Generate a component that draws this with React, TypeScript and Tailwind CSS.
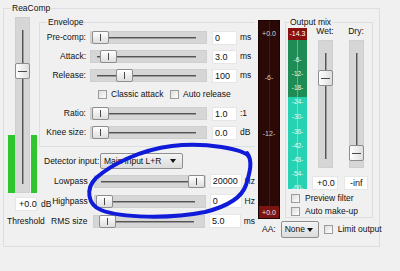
import React from 'react';

const HSlider: React.FC<{ cls: string; pos: number }> = ({ cls, pos }) => (
  <div className={`relative h-[13px] bg-[#d6d6d6] border border-[#cfcfcf] ${cls}`}>
    <div className="absolute left-[6px] right-[10px] top-[5px] h-[2px] bg-[#555] border-b border-[#9a9a9a]" />
    <div
      className="absolute top-[-1px] h-[13px] w-[17px] rounded-[2px] border border-[#8d8d8d] bg-gradient-to-b from-white to-[#dedede]"
      style={{ left: pos }}
    >
      <div className="absolute left-[7px] top-[2px] bottom-[2px] w-px bg-[#4a4a4a]" />
    </div>
  </div>
);

const VSlider: React.FC<{ cls: string; pos: number }> = ({ cls, pos }) => (
  <div className={`relative w-[15px] shrink-0 bg-[#d6d6d6] border border-[#cfcfcf] ${cls}`}>
    <div className="absolute top-[12px] bottom-[8px] left-[6px] w-[2px] bg-[#555] border-r border-[#9a9a9a]" />
    <div
      className="absolute left-[-1px] w-[15px] h-[16px] rounded-[2px] border border-[#8d8d8d] bg-gradient-to-r from-white to-[#dedede]"
      style={{ top: pos }}
    >
      <div className="absolute top-[7px] left-[2px] right-[2px] h-px bg-[#4a4a4a]" />
    </div>
  </div>
);

const Box: React.FC<{ cls: string; children: React.ReactNode }> = ({ cls, children }) => (
  <div className={`h-[14px] bg-white border border-[#e6e6e6] pl-[2px] leading-[12px] text-[9px] ${cls}`}>{children}</div>
);

const Check: React.FC<{ cls?: string }> = ({ cls = '' }) => (
  <div className={`w-[9px] h-[9px] border border-[#9c9c9c] bg-gradient-to-br from-[#dcdcdc] to-white shrink-0 ${cls}`} />
);

const Arrow = () => (
  <svg width="6" height="4" viewBox="0 0 6 4">
    <path d="M0 0 L6 0 L3 4 Z" fill="#111" />
  </svg>
);

const EnvRow: React.FC<{ label: string; pos: number; val: string; unit: string }> = ({ label, pos, val, unit }) => (
  <div className="flex h-[19px] items-center">
    <div className="w-[46px] text-right">{label}</div>
    <HSlider cls="ml-[4px] w-[117px]" pos={pos} />
    <Box cls="ml-[5px] w-[25px]">{val}</Box>
    <span className="ml-[3px]">{unit}</span>
  </div>
);

const DetRow: React.FC<{ label: string; pos: number; val: string; unit: string }> = ({ label, pos, val, unit }) => (
  <div className="flex h-[20px] items-center">
    <div className="w-[49px] text-right">{label}</div>
    <HSlider cls="ml-[6px] w-[113px]" pos={pos} />
    <Box cls="ml-[4px] w-[32px]">{val}</Box>
    <span className="ml-[3px]">{unit}</span>
  </div>
);

const grTicks = [
  { t: '-6-', y: 29 },
  { t: '-12-', y: 43 },
  { t: '-18-', y: 57 },
  { t: '-24-', y: 71 },
  { t: '-30-', y: 86 },
  { t: '-36-', y: 101 },
  { t: '-42-', y: 115 },
  { t: '-48-', y: 129 },
  { t: '-54-', y: 143 },
  { t: '-60-', y: 157 },
];

export default function App() {
  return (
    <div className="relative w-[400px] h-[271px] overflow-hidden bg-[#f0f0f0] pt-[8px] pl-[3px] text-[8.5px] leading-none text-[#111] font-['Liberation_Sans',Arial,sans-serif]">
      {/* ReaComp group */}
      <div className="relative w-[377px] h-[239px] border border-[#d9dfe3]">
        <div className="flex items-start">
          {/* threshold */}
          <div className="ml-[4px] w-[31px] shrink-0 flex flex-col">
            <div className="mt-[8px] flex h-[176px] items-stretch">
              <div className="w-[7px] flex flex-col justify-end">
                <div className="h-[58px] bg-[#2ec52e]" />
              </div>
              <VSlider cls="h-[176px]" pos={45} />
              <div className="w-[6px] ml-px flex flex-col justify-end">
                <div className="h-[58px] bg-[#2ec52e]" />
              </div>
            </div>
            <div className="mt-[4px] ml-[7px] flex items-center whitespace-nowrap">
              <Box cls="w-[22px] h-[12px] leading-[10px] pl-[3px]">+0.0</Box>
              <span className="ml-[4px]">dB</span>
            </div>
            <div className="mt-[6px] -ml-[1px] whitespace-nowrap">Threshold</div>
          </div>

          {/* envelope + detector */}
          <div className="w-[216px] shrink-0">
            <div className="relative mt-[13px] h-[125px] border border-[#d9dfe3] border-r-[#eef0f2] pt-[5px]">
              <span className="absolute left-[7px] top-[-5px] bg-[#f0f0f0] px-px">Envelope</span>
              <EnvRow label="Pre-comp:" pos={1} val="0" unit="ms" />
              <EnvRow label="Attack:" pos={9} val="3.0" unit="ms" />
              <EnvRow label="Release:" pos={25} val="100" unit="ms" />
              <div className="flex h-[19px] items-center">
                <Check cls="ml-[58px]" />
                <span className="ml-[4px] w-[59px] whitespace-nowrap">Classic attack</span>
                <Check />
                <span className="ml-[4px] whitespace-nowrap">Auto release</span>
              </div>
              <EnvRow label="Ratio:" pos={1} val="1.0" unit=":1" />
              <EnvRow label="Knee size:" pos={1} val="0.0" unit="dB" />
            </div>

            <div className="mt-[5px] flex h-[18px] items-center pl-[5px]">
              <span className="w-[56px] whitespace-nowrap">Detector input:</span>
              <div className="flex h-[16px] w-[83px] items-center justify-between rounded-[2px] border border-[#8e8e8e] bg-gradient-to-b from-[#f4f4f4] to-[#dcdcdc] pl-[3px] pr-[6px]">
                <span>Main input L+R</span>
                <Arrow />
              </div>
            </div>
            <div className="mt-px">
              <DetRow label="Lowpass" pos={93} val="20000" unit="Hz" />
              <DetRow label="Highpass" pos={1} val="0" unit="Hz" />
              <DetRow label="RMS size" pos={5} val="5.0" unit="ms" />
            </div>
          </div>

          {/* meters + output mix */}
          <div className="ml-[3px] shrink-0">
            <div className="flex items-start">
              {/* input meter */}
              <div className="relative mt-[11px] h-[199px] w-[22px] bg-[#2a0907] border border-[#1a0504]">
                <div className="absolute left-[10px] top-0 bottom-0 w-px bg-[#4a1813]" />
                <div className="absolute left-0 right-0 bottom-0 h-[12px] bg-[#7c1511]" />
                <span className="absolute left-0 right-0 top-[9px] text-center text-[7px] text-[#d8d8d8]">+0.0</span>
                <span className="absolute left-0 right-0 top-[53px] text-center text-[7px] text-[#d0d0d0]">-6-</span>
                <span className="absolute left-0 right-0 top-[109px] text-center text-[7px] text-[#d0d0d0]">-12-</span>
                <span className="absolute left-0 right-0 bottom-[2px] text-center text-[7px] text-[#e6e6e6]">+0.0</span>
              </div>

              {/* output mix group */}
              <div className="relative ml-[5px] mt-[13px] h-[196px] w-[88px] border border-[#d9dfe3]">
                <span className="absolute left-[3px] top-[-5px] bg-[#f0f0f0] px-px">Output mix</span>
                <div className="flex items-start">
                  {/* gain reduction meter */}
                  <div className="relative ml-[2px] mt-[5px] h-[161px] w-[19px] flex flex-col">
                    <div className="h-[12px] bg-[#8c0f0f] text-[7px] text-white text-center leading-[12px]">-14.3</div>
                    <div className="h-[57px] bg-[#1f8c56]" />
                    <div className="flex-1 bg-[#27d2b2]" />
                    <div className="absolute left-[9px] top-[12px] bottom-0 w-px bg-[#ffffff55]" />
                    {grTicks.map((g) => (
                      <span
                        key={g.t}
                        className="absolute left-0 right-0 text-center text-[6.5px] text-[#e8f8f2]"
                        style={{ top: g.y }}
                      >
                        {g.t}
                      </span>
                    ))}
                  </div>

                  {/* wet */}
                  <div className="ml-[5px] w-[26px] flex flex-col items-center">
                    <span className="mt-[4px] h-[9px]">Wet:</span>
                    <VSlider cls="mt-[4px] h-[128px]" pos={29} />
                    <Box cls="mt-[8px] w-[26px] pl-[4px]">+0.0</Box>
                  </div>

                  {/* dry */}
                  <div className="ml-[6px] w-[24px] flex flex-col items-center">
                    <span className="mt-[4px] h-[9px]">Dry:</span>
                    <VSlider cls="mt-[4px] h-[128px]" pos={104} />
                    <Box cls="mt-[8px] w-[24px] pl-[5px]">-inf</Box>
                  </div>
                </div>
                <div className="mt-[2px] ml-[5px] flex h-[12px] items-center">
                  <Check />
                  <span className="ml-[5px]">Preview filter</span>
                </div>
                <div className="mt-px ml-[5px] flex h-[12px] items-center">
                  <Check />
                  <span className="ml-[5px]">Auto make-up</span>
                </div>
              </div>
            </div>

            <div className="mt-[2px] flex h-[17px] items-center pl-[4px]">
              <span>AA:</span>
              <div className="ml-[5px] flex h-[17px] w-[38px] items-center justify-between rounded-[2px] border border-[#8e8e8e] bg-gradient-to-b from-[#f4f4f4] to-[#dcdcdc] pl-[3px] pr-[5px]">
                <span>None</span>
                <Arrow />
              </div>
              <Check cls="ml-[5px]" />
              <span className="ml-[5px] whitespace-nowrap">Limit output</span>
            </div>
          </div>
        </div>
      </div>

      {/* group caption sits over the top border */}
      <span className="absolute left-[11px] top-[4px] z-10 bg-[#f0f0f0] px-px">ReaComp</span>

      {/* hand-drawn highlight */}
      <svg className="absolute left-0 top-0 z-20 pointer-events-none" width="400" height="271" viewBox="0 0 400 271">
        <path
          d="M249 157 C245 149 205 142 172 146 C140 150 112 164 96 178 C85 189 88 205 101 210 C121 218 170 219 205 212 C229 206 242 197 246 185 C250 172 253 161 247 153"
          fill="none"
          stroke="#0f1bd8"
          strokeWidth="4"
          strokeLinecap="round"
        />
      </svg>
    </div>
  );
}
